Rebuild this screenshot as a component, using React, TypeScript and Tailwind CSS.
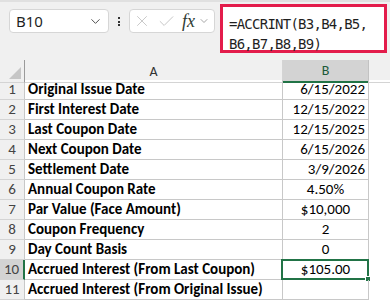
import { ChevronDown, X, Check } from 'lucide-react';

type Row = { label: string; value: string; align: 'right' | 'center' };

const rows: Row[] = [
  { label: 'Original Issue Date', value: '6/15/2022', align: 'right' },
  { label: 'First Interest Date', value: '12/15/2022', align: 'right' },
  { label: 'Last Coupon Date', value: '12/15/2025', align: 'right' },
  { label: 'Next Coupon Date', value: '6/15/2026', align: 'right' },
  { label: 'Settlement Date', value: '3/9/2026', align: 'right' },
  { label: 'Annual Coupon Rate', value: '4.50%', align: 'center' },
  { label: 'Par Value (Face Amount)', value: '$10,000', align: 'center' },
  { label: 'Coupon Frequency', value: '2', align: 'center' },
  { label: 'Day Count Basis', value: '0', align: 'center' },
  { label: 'Accrued Interest (From Last Coupon)', value: '$105.00', align: 'center' },
  { label: 'Accrued Interest (From Original Issue)', value: '', align: 'center' },
];

const cellFont = "font-['Carlito','Lato',sans-serif]";

function FormulaBar() {
  return (
    <div className="h-[60px] bg-[#f0f0f0] border-t-2 border-[#e0e0e0] flex items-start">
      {/* name box */}
      <div className="mt-[7px] ml-[9px] w-[100px] h-[24px] bg-white border border-[#d6d6d6] rounded-[4px] flex items-center justify-between pl-[6px] pr-[5px]">
        <span className="font-['Noto_Sans',sans-serif] text-[15px] text-[#1f1f1f] leading-none">B10</span>
        <ChevronDown className="w-[15px] h-[15px] text-[#444]" strokeWidth={1.5} />
      </div>
      <div className="mt-[15px] ml-[9px] flex flex-col gap-[1.5px]">
        <div className="w-[2px] h-[2px] bg-[#333]" />
        <div className="w-[2px] h-[2px] bg-[#333]" />
        <div className="w-[2px] h-[2px] bg-[#333]" />
      </div>
      {/* cancel / enter / fx */}
      <div className="mt-[7px] ml-[9px] w-[86px] h-[24px] bg-white border border-[#d6d6d6] rounded-[4px] flex items-center pl-[3px] gap-[3px]">
        <X className="w-[18px] h-[18px] text-[#c4c4c4]" strokeWidth={1.2} />
        <Check className="w-[19px] h-[19px] ml-[3px] text-[#c4c4c4]" strokeWidth={1.2} />
        <span className="ml-[3px] font-['Liberation_Serif',serif] italic text-[18px] text-[#2f3b33] leading-none">fx</span>
        <ChevronDown className="w-[12px] h-[12px] text-[#888]" strokeWidth={1.5} />
      </div>
      {/* formula */}
      <div className="mt-[2px] ml-[5px] w-[167px] h-[49px] bg-white border-[3px] border-[#e31c4b] pl-[6px] pt-[7px]">
        <div className="font-['DejaVu_Sans_Mono',monospace] text-[14px] leading-[20px] tracking-[-0.75px] text-[#1f1f1f]">
          =ACCRINT(B3,B4,B5,
          <br />
          B6,B7,B8,B9)
        </div>
      </div>
    </div>
  );
}

export default function App() {
  return (
    <div className="w-[390px] h-[302px] bg-white overflow-hidden">
      <FormulaBar />
      {/* column headers */}
      <div className="grid grid-cols-[25px_258px_86px_1fr] h-[20px] bg-[#f0f0f0]">
        <div className="relative border-r border-[#9a9a9a] border-b border-b-[#d4d4d4]">
          <svg className="absolute right-[3px] bottom-[3px]" width="12" height="12" viewBox="0 0 12 12">
            <polygon points="12,0 12,12 0,12" fill="#c6c6c6" />
          </svg>
        </div>
        <div className={`border-r border-b border-[#d4d4d4] flex items-center justify-center text-[14px] text-[#333] ${cellFont}`}>
          A
        </div>
        <div className={`bg-[#d3d3d3] border-r border-[#c2c2c2] border-b-2 border-b-[#217346] flex items-center justify-center text-[14px] text-[#1d5a3a] ${cellFont}`}>
          B
        </div>
        <div className="border-b border-[#d4d4d4]" />
      </div>
      {/* rows */}
      {rows.map((r, i) => {
        const sel = i === 9;
        return (
          <div key={i} className={`grid grid-cols-[25px_258px_86px_1fr] h-[20px] text-[15px] leading-[19px] ${cellFont}`}>
            <div
              className={`flex items-center justify-center border-b border-[#d4d4d4] text-[#444] ${
                sel ? 'bg-[#d3d3d3] border-r-2 border-r-[#217346]' : 'bg-[#f0f0f0] border-r border-r-[#c8c8c8]'
              }`}
            >
              {i + 1}
            </div>
            <div className="border-r border-b border-[#c8c8c8] pl-[3px] font-bold text-black whitespace-nowrap overflow-hidden">
              {r.label}
            </div>
            <div
              className={`relative border-r border-b border-[#c8c8c8] text-black ${
                r.align === 'right' ? 'text-right pr-[3px]' : 'text-center'
              }`}
            >
              {r.value}
              {sel && (
                <div className="absolute -left-[2px] -top-[1px] w-[88px] h-[21px] border-2 border-[#217346]">
                  <div className="absolute -right-[4px] -bottom-[4px] w-[6px] h-[6px] bg-[#217346] border border-white" />
                </div>
              )}
            </div>
            <div />
          </div>
        );
      })}
    </div>
  );
}
